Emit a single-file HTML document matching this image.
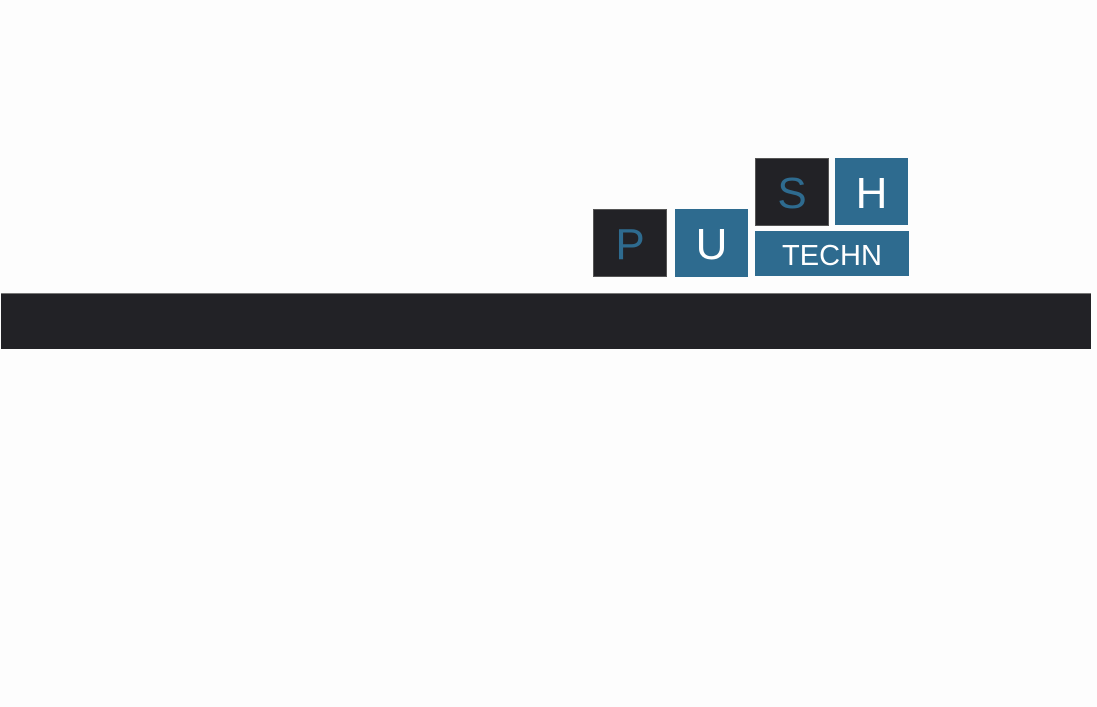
<!DOCTYPE html>
<html><head><style>
html,body{margin:0;padding:0;background:#fdfdfd;width:1097px;height:707px;overflow:hidden;position:relative;font-family:"Liberation Sans",sans-serif}
.b{position:absolute;display:flex;align-items:center;justify-content:center;font-weight:normal;box-sizing:border-box;padding-top:4px}
.d{background:#222226;border:1px solid #555}
.u{background:#2e6b8f}
</style></head><body>
<div class="b d" style="left:593px;top:209px;width:74px;height:68px;color:#2e6b8f;font-size:44px">P</div>
<div class="b u" style="left:675px;top:209px;width:73px;height:68px;color:#fff;font-size:44px">U</div>
<div class="b d" style="left:755px;top:158px;width:74px;height:68px;color:#2e6b8f;font-size:44px">S</div>
<div class="b u" style="left:835px;top:158px;width:73px;height:67px;color:#fff;font-size:44px">H</div>
<div class="b u" style="left:755px;top:231px;width:154px;height:45px;color:#fff;font-size:29px;padding-top:6px">TECHN</div>
<div style="position:absolute;left:1px;top:293px;width:1090px;height:55px;background:#222226;border-top:1px solid #777"></div>
</body></html>
